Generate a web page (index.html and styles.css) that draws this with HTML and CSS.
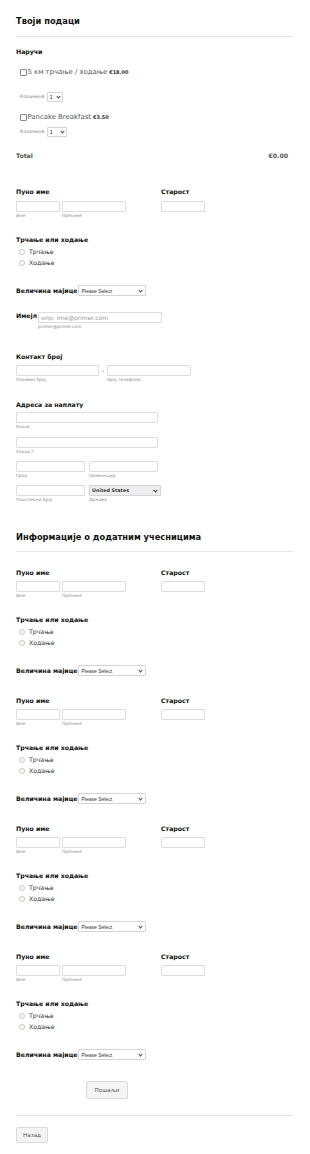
FILE: index.html
```html
<!DOCTYPE html>
<html lang="sr">
<head>
    <meta charset="UTF-8">
    <title>Пријава</title>
    <link rel="stylesheet" href="styles.css">
</head>
<body>
<form class="form">
    <!-- Your details -->
    <h2 class="section-head">Твоји подаци</h2>

    <div class="label order-label">Наручи</div>

    <div class="product">
        <span class="check"></span>5 км трчање / ходање <b class="price">€18.00</b>
    </div>
    <div class="qty">
        <span class="qty-label">Количина</span>
        <span class="select-wrap qty-select"><select><option>1</option></select></span>
    </div>

    <div class="product product-2">
        <span class="check"></span>Pancake Breakfast <b class="price">€3.50</b>
    </div>
    <div class="qty qty-2">
        <span class="qty-label">Количина</span>
        <span class="select-wrap qty-select wide"><select><option>1</option></select></span>
    </div>

    <div class="total">
        <span>Total</span>
        <span>€0.00</span>
    </div>

    <div class="name-row first-name-row">
        <div class="name-col">
            <div class="label">Пуно име</div>
            <div class="inputs">
                <div class="sub"><input class="in w44"><span>Име</span></div>
                <div class="sub"><input class="in w64"><span>Презиме</span></div>
            </div>
        </div>
        <div class="age-col">
            <div class="label">Старост</div>
            <div class="inputs"><input class="in w44"></div>
        </div>
    </div>

    <div class="label run-label">Трчање или ходање</div>
    <div class="radio"><span class="circle"></span>Трчање</div>
    <div class="radio"><span class="circle"></span>Ходање</div>

    <div class="inline-row shirt">
        <span class="label">Величина мајице</span>
        <span class="select-wrap shirt-select"><select><option>Please Select</option></select></span>
    </div>

    <div class="email-row">
        <span class="label">Имејл</span>
        <div class="sub">
            <input class="in w124" placeholder="нпр: ime@primer.com">
            <span>primer@primer.com</span>
        </div>
    </div>

    <div class="label contact-label">Контакт број</div>
    <div class="inputs phone">
        <div class="sub"><input class="in w83"><span>Позивни број</span></div>
        <span class="dash">-</span>
        <div class="sub"><input class="in w84"><span>Број телефона</span></div>
    </div>

    <div class="label address-label">Адреса за наплату</div>
    <div class="sub addr"><input class="in w142"><span>Улица</span></div>
    <div class="sub addr gap6"><input class="in w142"><span>Улица 2</span></div>
    <div class="inputs addr gap5">
        <div class="sub"><input class="in w69"><span>Град</span></div>
        <div class="sub"><input class="in w69"><span>Провинција</span></div>
    </div>
    <div class="inputs addr gap5">
        <div class="sub"><input class="in w69"><span>Поштански број</span></div>
        <div class="sub">
            <span class="select-wrap country-select"><select><option>United States</option></select></span>
            <span>Држава</span>
        </div>
    </div>

    <!-- Extra participants -->
    <h2 class="section-head second">Информације о додатним учесницима</h2>

    <div class="participant">
        <div class="name-row">
            <div class="name-col">
                <div class="label">Пуно име</div>
                <div class="inputs">
                    <div class="sub"><input class="in w44"><span>Име</span></div>
                    <div class="sub"><input class="in w64"><span>Презиме</span></div>
                </div>
            </div>
            <div class="age-col">
                <div class="label">Старост</div>
                <div class="inputs"><input class="in w44"></div>
            </div>
        </div>
        <div class="label run-label">Трчање или ходање</div>
        <div class="radio"><span class="circle"></span>Трчање</div>
        <div class="radio"><span class="circle"></span>Ходање</div>
        <div class="inline-row shirt">
            <span class="label">Величина мајице</span>
            <span class="select-wrap shirt-select"><select><option>Please Select</option></select></span>
        </div>
    </div>

    <div class="participant">
        <div class="name-row">
            <div class="name-col">
                <div class="label">Пуно име</div>
                <div class="inputs">
                    <div class="sub"><input class="in w44"><span>Име</span></div>
                    <div class="sub"><input class="in w64"><span>Презиме</span></div>
                </div>
            </div>
            <div class="age-col">
                <div class="label">Старост</div>
                <div class="inputs"><input class="in w44"></div>
            </div>
        </div>
        <div class="label run-label">Трчање или ходање</div>
        <div class="radio"><span class="circle"></span>Трчање</div>
        <div class="radio"><span class="circle"></span>Ходање</div>
        <div class="inline-row shirt">
            <span class="label">Величина мајице</span>
            <span class="select-wrap shirt-select"><select><option>Please Select</option></select></span>
        </div>
    </div>

    <div class="participant">
        <div class="name-row">
            <div class="name-col">
                <div class="label">Пуно име</div>
                <div class="inputs">
                    <div class="sub"><input class="in w44"><span>Име</span></div>
                    <div class="sub"><input class="in w64"><span>Презиме</span></div>
                </div>
            </div>
            <div class="age-col">
                <div class="label">Старост</div>
                <div class="inputs"><input class="in w44"></div>
            </div>
        </div>
        <div class="label run-label">Трчање или ходање</div>
        <div class="radio"><span class="circle"></span>Трчање</div>
        <div class="radio"><span class="circle"></span>Ходање</div>
        <div class="inline-row shirt">
            <span class="label">Величина мајице</span>
            <span class="select-wrap shirt-select"><select><option>Please Select</option></select></span>
        </div>
    </div>

    <div class="participant">
        <div class="name-row">
            <div class="name-col">
                <div class="label">Пуно име</div>
                <div class="inputs">
                    <div class="sub"><input class="in w44"><span>Име</span></div>
                    <div class="sub"><input class="in w64"><span>Презиме</span></div>
                </div>
            </div>
            <div class="age-col">
                <div class="label">Старост</div>
                <div class="inputs"><input class="in w44"></div>
            </div>
        </div>
        <div class="label run-label">Трчање или ходање</div>
        <div class="radio"><span class="circle"></span>Трчање</div>
        <div class="radio"><span class="circle"></span>Ходање</div>
        <div class="inline-row shirt">
            <span class="label">Величина мајице</span>
            <span class="select-wrap shirt-select"><select><option>Please Select</option></select></span>
        </div>
    </div>

    <button type="button" class="btn submit">Пошаљи</button>
    <div class="footer">
        <button type="button" class="btn back">Назад</button>
    </div>
</form>
</body>
</html>
```

FILE: styles.css
```css
body {
    margin: 0;
    background: #fff;
    font-family: "DejaVu Sans", Verdana, sans-serif;
    color: #111;
}
.form {
    width: 277px;
    padding: 0 16px;
}
.section-head {
    margin: 14px 0 0;
    padding-bottom: 8px;
    border-bottom: 1px solid #e8e8e8;
    font-size: 8.3px;
    line-height: 14px;
    font-weight: bold;
}
.section-head.second {
    margin-top: 26px;
    padding-bottom: 7px;
}
.label {
    font-size: 6.2px;
    line-height: 10px;
    font-weight: bold;
    color: #111;
}
.order-label {
    margin-top: 10px;
}

/* products */
.product {
    margin-top: 10px;
    padding-left: 4px;
    display: flex;
    align-items: center;
    height: 10px;
    font-size: 6.9px;
    color: #555;
}
.product-2 {
    margin-top: 10px;
}
.check {
    width: 5px;
    height: 5px;
    border: 1px solid #888;
    border-radius: 1px;
    margin-right: 0.5px;
}
.price {
    margin-left: 2px;
    font-size: 5px;
    color: #333;
}
.qty {
    margin-top: 14px;
    padding-left: 4px;
    display: flex;
    align-items: center;
    gap: 2px;
    height: 11px;
}
.qty-2 {
    margin-top: 4px;
}
.qty-label {
    font-size: 4.8px;
    color: #888;
}
.total {
    margin-top: 14px;
    display: flex;
    justify-content: space-between;
    padding-right: 5px;
    font-size: 6.2px;
    line-height: 10px;
    font-weight: bold;
    color: #555;
}

/* selects */
.select-wrap {
    position: relative;
    display: inline-block;
}
.select-wrap select {
    appearance: none;
    -webkit-appearance: none;
    display: block;
    margin: 0;
    height: 11px;
    padding: 0 0 0 2px;
    border: 1px solid #d4d4d4;
    border-radius: 1px;
    background: #fff;
    font-family: "Liberation Sans", Arial, sans-serif;
    font-size: 5px;
    color: #333;
}
.select-wrap::after {
    content: "";
    position: absolute;
    top: 3.5px;
    right: 4px;
    width: 2px;
    height: 2px;
    border-right: 1px solid #444;
    border-bottom: 1px solid #444;
    transform: rotate(45deg);
}
.qty-select select {
    width: 16px;
    height: 10px;
    font-family: "DejaVu Sans", sans-serif;
    font-size: 5.4px;
}
.qty-select.wide select {
    width: 20px;
}
.qty-select::after {
    top: 3px;
    right: 3px;
}
.shirt-select select {
    width: 68px;
}
.country-select select {
    width: 72px;
    background: #eee;
    font-family: "DejaVu Sans", sans-serif;
    font-weight: bold;
    font-size: 4.8px;
    color: #333;
}

/* inputs */
.inputs {
    display: flex;
    gap: 2px;
    align-items: flex-start;
}
.in {
    display: block;
    box-sizing: border-box;
    height: 11px;
    margin: 0;
    padding: 0 2px;
    border: 1px solid #dcdcdc;
    border-radius: 1px;
    font-family: "DejaVu Sans", sans-serif;
    font-size: 6px;
}
.in::placeholder {
    color: #9a9a9a;
}
.w44 { width: 44px; }
.w64 { width: 64px; }
.w69 { width: 69px; }
.w83 { width: 83px; }
.w84 { width: 84px; }
.w124 { width: 124px; }
.w142 { width: 142px; }
.sub {
    display: flex;
    flex-direction: column;
}
.sub span {
    font-size: 4.3px;
    line-height: 8px;
    color: #8a8a8a;
}

.name-row {
    display: flex;
}
.first-name-row {
    margin-top: 26px;
}
.name-col {
    width: 145px;
}
.name-row .inputs {
    margin-top: 4px;
}
.run-label {
    margin-top: 15px;
}
.radio {
    padding-left: 3px;
    display: flex;
    align-items: center;
    gap: 4px;
    height: 11px;
    font-size: 6.2px;
    color: #333;
}
.run-label + .radio {
    margin-top: 1px;
}
.circle {
    width: 4px;
    height: 4px;
    border: 1px solid #c4c4c4;
    border-radius: 50%;
}
.inline-row {
    display: flex;
    align-items: center;
    gap: 1px;
}
.shirt {
    margin-top: 17px;
}

.email-row {
    margin-top: 16px;
    display: flex;
    align-items: flex-start;
    gap: 1px;
}
.email-row .label {
    line-height: 7px;
}
.contact-label {
    margin-top: 21px;
}
.phone {
    margin-top: 3px;
}
.dash {
    font-size: 6px;
    line-height: 11px;
    color: #666;
    padding: 0 1px;
}
.address-label {
    margin-top: 16px;
}
.addr {
    margin-top: 2px;
}
.addr.gap6 { margin-top: 6px; }
.addr.gap5 { margin-top: 5px; gap: 4px; }

.participant {
    margin-top: 20px;
}
.section-head.second + .participant {
    margin-top: 16px;
}
.participant .name-row .inputs {
    margin-top: 3px;
}

/* buttons */
.btn {
    display: block;
    box-sizing: border-box;
    border: 1px solid #dadada;
    border-radius: 2px;
    background: #f4f4f4;
    font-family: "DejaVu Sans", sans-serif;
    font-size: 5.6px;
    color: #555;
    padding: 0;
}
.submit {
    margin: 21px 0 0 70px;
    width: 42px;
    height: 18px;
}
.footer {
    margin-top: 16px;
    border-top: 1px solid #e6e6e6;
    padding-top: 11px;
}
.back {
    width: 32px;
    height: 16px;
}
```
